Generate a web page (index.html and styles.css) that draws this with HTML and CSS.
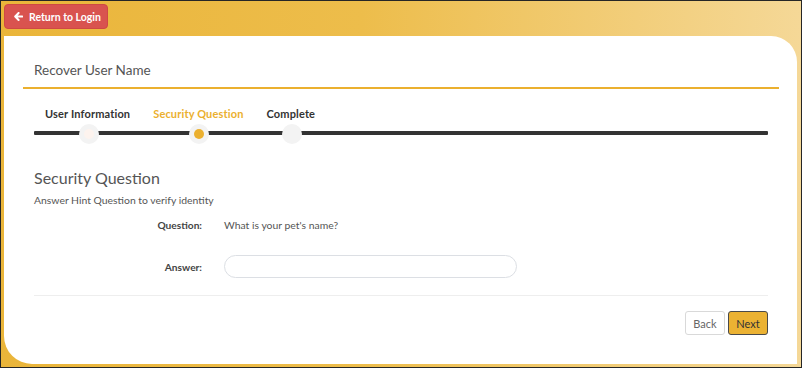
FILE: index.html
```html
<!DOCTYPE html>
<html>
<head>
<meta charset="utf-8">
<link rel="stylesheet" href="styles.css">
</head>
<body>
<div class="frame">
  <div class="topbar">
    <button class="btn-return" type="button">
      <svg class="arrow" width="9" height="9" viewBox="0 0 9 9"><path d="M4.6 1 L1.2 4.5 L4.6 8 M1.5 4.5 H8.2" fill="none" stroke="#fff" stroke-width="2" stroke-linecap="round" stroke-linejoin="round"/></svg>
      <span>Return to Login</span>
    </button>
  </div>
  <div class="card">
    <div class="card-head"><h1 class="title">Recover User Name</h1></div>
    <div class="steps">
      <div class="step done"><span class="step-label">User Information</span><span class="dot"><i></i></span></div>
      <div class="step active"><span class="step-label">Security Question</span><span class="dot"><i></i></span></div>
      <div class="step"><span class="step-label">Complete</span><span class="dot"></span></div>
    </div>
    <div class="form">
      <h2 class="form-title">Security Question</h2>
      <p class="hint">Answer Hint Question to verify identity</p>
      <div class="row q-row"><span class="lbl">Question:</span><span class="val">What is your pet's name?</span></div>
      <div class="row a-row"><span class="lbl">Answer:</span><input class="answer" type="text"></div>
    </div>
    <div class="sep"></div>
    <div class="actions">
      <button class="btn btn-back" type="button">Back</button>
      <button class="btn btn-next" type="button">Next</button>
    </div>
  </div>
</div>
</body>
</html>
```
FILE: styles.css
```css
* { box-sizing: border-box; }
html, body { margin: 0; padding: 0; }
body { font-family: Lato, "Open Sans", Arial, sans-serif; }
.frame {
  width: 802px;
  height: 368px;
  border: 1px solid #262626;
  background: linear-gradient(to right, #eab53a 0%, #edbd4b 45%, #f5d897 100%);
  padding: 3px 4px 3px 3px;
  display: flex;
  flex-direction: column;
  gap: 7px;
}
.topbar { display: flex; }
.btn-return {
  height: 25px;
  width: 104px;
  background: #d9534f;
  border: 1px solid #cf4944;
  border-radius: 4px;
  color: #fff;
  font-family: Lato, sans-serif;
  font-weight: bold;
  font-size: 10.5px;
  display: flex;
  align-items: center;
  gap: 6px;
  padding: 0 0 0 9px;
}
.arrow { display: block; }
.card {
  flex: 1;
  background: #fff;
  border-radius: 0 26px 0 28px;
  padding: 0 18px 0 19px;
  display: flex;
  flex-direction: column;
}
.card-head {
  border-bottom: 2px solid #ebb02f;
  padding: 24px 11px 7px;
}
.title {
  margin: 0;
  font-size: 13.5px;
  line-height: 20px;
  font-weight: normal;
  color: #555;
}
.steps {
  position: relative;
  display: flex;
  gap: 23px;
  padding-left: 22px;
  margin-top: 18px;
}
.steps::before {
  content: "";
  position: absolute;
  left: 11px;
  right: 11px;
  top: 24px;
  height: 4px;
  background: #333;
  border-radius: 1px;
}
.step {
  position: relative;
  display: flex;
  flex-direction: column;
  align-items: center;
  gap: 3px;
}
.step-label {
  font-size: 11px;
  line-height: 14px;
  font-weight: bold;
  letter-spacing: 0.15px;
  color: #333;
  white-space: nowrap;
}
.step.active .step-label { color: #ebb02f; }
.dot {
  width: 20px;
  height: 20px;
  border-radius: 50%;
  background: #f3f3f3;
  display: flex;
  align-items: center;
  justify-content: center;
  margin-left: 2px;
}
.dot i { width: 10px; height: 10px; border-radius: 50%; display: block; }
.step.done .dot i { background: #fdf3ee; }
.step.active .dot i { background: #ebb02f; }
.form { padding: 0 11px; }
.form-title {
  margin: 24px 0 0;
  font-size: 16px;
  line-height: 20px;
  font-weight: normal;
  color: #555;
}
.hint {
  margin: 5px 0 0;
  font-size: 10.4px;
  line-height: 14px;
  color: #555;
}
.row {
  display: flex;
  align-items: center;
  gap: 22px;
}
.lbl {
  width: 168px;
  text-align: right;
  font-size: 10.2px;
  font-weight: bold;
  color: #444;
}
.val { font-size: 10.4px; color: #555; }
.q-row { margin-top: 11px; line-height: 14px; }
.a-row { margin-top: 23px; }
.answer {
  width: 293px;
  height: 23px;
  border: 1px solid #dcdfe4;
  border-radius: 12px;
  outline: none;
  padding: 0 10px;
  font-family: Lato, sans-serif;
}
.sep {
  margin: 17px 11px 0;
  height: 1px;
  background: #eeeeee;
}
.actions {
  display: flex;
  justify-content: flex-end;
  gap: 3px;
  padding: 15px 11px 0;
}
.btn {
  width: 40px;
  height: 24px;
  border-radius: 3px;
  font-family: Lato, sans-serif;
  font-size: 11px;
  padding: 0;
}
.btn-back { background: #fff; border: 1px solid #d9d9d9; color: #666; }
.btn-next { background: #ebb233; border: 1px solid #4a4a4a; color: #333; }
```
